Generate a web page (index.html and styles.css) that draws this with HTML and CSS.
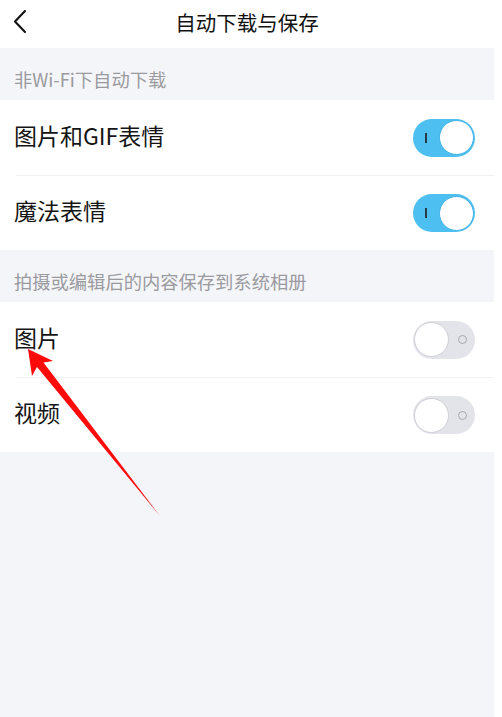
FILE: index.html
```html
<!DOCTYPE html>
<html lang="zh">
<head>
<meta charset="utf-8">
<title>自动下载与保存</title>
<link rel="stylesheet" href="styles.css">
</head>
<body>
<div class="page">
  <header class="nav">
    <svg class="back" width="20" height="28" viewBox="0 0 20 28"><path d="M15 4 L5 14.5 L15 25" fill="none" stroke="#111" stroke-width="2.1" stroke-linecap="round" stroke-linejoin="round"/></svg>
    <div class="title">自动下载与保存</div>
  </header>

  <div class="section-title">非Wi-Fi下自动下载</div>
  <div class="group">
    <div class="row">
      <span class="label">图片和GIF表情</span>
      <span class="switch on"><span class="mark"></span><span class="knob"></span></span>
    </div>
    <div class="row">
      <span class="label">魔法表情</span>
      <span class="switch on"><span class="mark"></span><span class="knob"></span></span>
    </div>
  </div>

  <div class="section-title">拍摄或编辑后的内容保存到系统相册</div>
  <div class="group">
    <div class="row">
      <span class="label">图片</span>
      <span class="switch off"><span class="knob"></span><span class="mark"></span></span>
    </div>
    <div class="row">
      <span class="label">视频</span>
      <span class="switch off"><span class="knob"></span><span class="mark"></span></span>
    </div>
  </div>
  <div class="rest"></div>

  <svg class="arrow" width="494" height="717" viewBox="0 0 494 717">
    <polygon points="28,349 53,361 43.5,362.5 160,516 37,367 32,376" fill="#ff0a0a"/>
  </svg>
</div>
</body>
</html>
```

FILE: styles.css
```css
html, body {
  margin: 0;
  padding: 0;
  background: #ffffff;
}
body {
  font-family: "Noto Sans CJK SC", "Noto Sans", sans-serif;
  color: #151515;
}
.page {
  position: relative;
  width: 494px;
  height: 717px;
  background: #f4f5f9;
  display: flex;
  flex-direction: column;
  overflow: hidden;
}
.nav {
  height: 48px;
  background: #ffffff;
  display: flex;
  align-items: center;
  justify-content: center;
  position: relative;
  flex-shrink: 0;
}
.back {
  position: absolute;
  left: 10px;
  top: 7px;
}
.title {
  font-size: 20.5px;
  line-height: 1;
  color: #111;
  margin-bottom: 4px;
}
.section-title {
  height: 52px;
  box-sizing: border-box;
  padding-left: 14px;
  display: flex;
  align-items: center;
  padding-top: 9px;
  font-size: 18.3px;
  color: #9a9a9f;
  flex-shrink: 0;
}
.group {
  background: #ffffff;
  flex-shrink: 0;
}
.row {
  height: 75px;
  box-sizing: border-box;
  margin-left: 16px;
  padding-right: 19px;
  display: flex;
  align-items: center;
  justify-content: space-between;
}
.row + .row {
  border-top: 1px solid #f1f1f3;
}
.label {
  font-size: 23px;
  margin-left: -2px;
  margin-bottom: 6px;
  color: #151515;
}
.switch {
  width: 62px;
  height: 38px;
  border-radius: 19px;
  box-sizing: border-box;
  display: flex;
  align-items: center;
  position: relative;
}
.switch.on {
  background: #4dbff0;
  justify-content: flex-end;
  padding-right: 1px;
}
.switch.off {
  background: #e3e3ea;
  padding-left: 1px;
}
.knob {
  width: 35px;
  height: 35px;
  border-radius: 50%;
  background: #ffffff;
  box-sizing: border-box;
}
.switch.on .knob {
  border: 1px solid #3fb2e6;
}
.switch.off .knob {
  border: 1.5px solid #cfcfd6;
}
.switch.on .mark {
  position: absolute;
  left: 12px;
  top: 14px;
  width: 2px;
  height: 10px;
  background: #2a3a44;
}
.switch.off .mark {
  width: 9px;
  height: 9px;
  border-radius: 50%;
  border: 1.5px solid #a8a8b0;
  box-sizing: border-box;
  margin-left: 9px;
}
.rest {
  flex: 1;
}
.arrow {
  position: absolute;
  left: 0;
  top: 0;
  pointer-events: none;
}
```
